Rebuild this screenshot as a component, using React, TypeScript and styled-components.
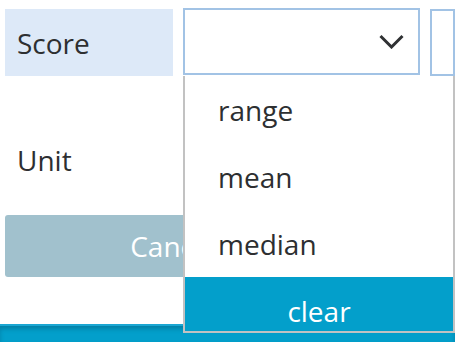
import styled, { createGlobalStyle } from 'styled-components';

const GlobalStyle = createGlobalStyle`
  html, body {
    margin: 0;
    padding: 0;
    background: #ffffff;
    font-family: "Open Sans", "Noto Sans", sans-serif;
    color: #2d2f31;
  }
  * {
    box-sizing: border-box;
  }
`;

const Page = styled.div`
  height: 100vh;
  display: flex;
  flex-direction: column;
  overflow: hidden;
`;

const Main = styled.main`
  flex: 1;
  padding: 9px 0 0 5px;
  position: relative;
`;

const FieldRow = styled.div<{ $gap?: number }>`
  display: grid;
  grid-template-columns: 168px 237px 1fr;
  column-gap: 10px;
  height: 67px;
  margin-top: ${({ $gap }) => $gap ?? 0}px;
`;

const Label = styled.div<{ $active?: boolean }>`
  display: flex;
  align-items: center;
  padding-left: 12px;
  font-size: 28px;
  background: ${({ $active }) => ($active ? '#dde9f8' : 'transparent')};
`;

const SelectWrap = styled.div`
  position: relative;
  margin-top: -1px;
`;

const SelectBox = styled.div`
  height: 67px;
  border: 2px solid #a2c3e5;
  display: flex;
  align-items: center;
  justify-content: flex-end;
  padding-right: 14px;
  background: #fff;
`;

const Menu = styled.ul`
  position: absolute;
  top: 100%;
  left: 0;
  width: 272px;
  height: 257px;
  margin: 0;
  padding: 0;
  list-style: none;
  background: #fff;
  border: 2px solid #c2c2c2;
  border-top: none;
  overflow: hidden;
  z-index: 10;
`;

const MenuItem = styled.li<{ $action?: boolean }>`
  height: 67px;
  display: flex;
  align-items: center;
  justify-content: ${({ $action }) => ($action ? 'center' : 'flex-start')};
  padding-left: ${({ $action }) => ($action ? 0 : 33)}px;
  font-size: 28px;
  color: ${({ $action }) => ($action ? '#ffffff' : '#2d2f31')};
  background: ${({ $action }) => ($action ? '#039fcb' : '#ffffff')};
`;

const Actions = styled.div`
  margin-top: 22px;
  display: flex;
`;

const CancelButton = styled.button`
  width: 337px;
  height: 62px;
  border: none;
  border-radius: 3px;
  background: #a1c1cd;
  color: #ffffff;
  font-family: inherit;
  font-size: 28px;
`;

const Footer = styled.footer`
  height: 18px;
  background: #039fcb;
  border-top: 2px solid #1ba6d2;
  box-shadow: inset 0 3px 4px rgba(0, 40, 60, 0.25);
`;

const Chevron = () => (
  <svg width="25" height="15" viewBox="0 0 25 15" fill="none">
    <polyline points="1.5,2 12.5,13 23.5,2" stroke="#2f3133" strokeWidth="3" />
  </svg>
);

export default function App() {
  const options = ['range', 'mean', 'median'];

  return (
    <Page>
      <GlobalStyle />
      <Main>
        <FieldRow>
          <Label $active>Score</Label>
          <SelectWrap>
            <SelectBox>
              <Chevron />
            </SelectBox>
            <Menu>
              {options.map((o) => (
                <MenuItem key={o}>{o}</MenuItem>
              ))}
              <MenuItem $action>clear</MenuItem>
            </Menu>
          </SelectWrap>
          <SelectBox />
        </FieldRow>
        <FieldRow $gap={50}>
          <Label>Unit</Label>
        </FieldRow>
        <Actions>
          <CancelButton>Cancel</CancelButton>
        </Actions>
      </Main>
      <Footer />
    </Page>
  );
}
